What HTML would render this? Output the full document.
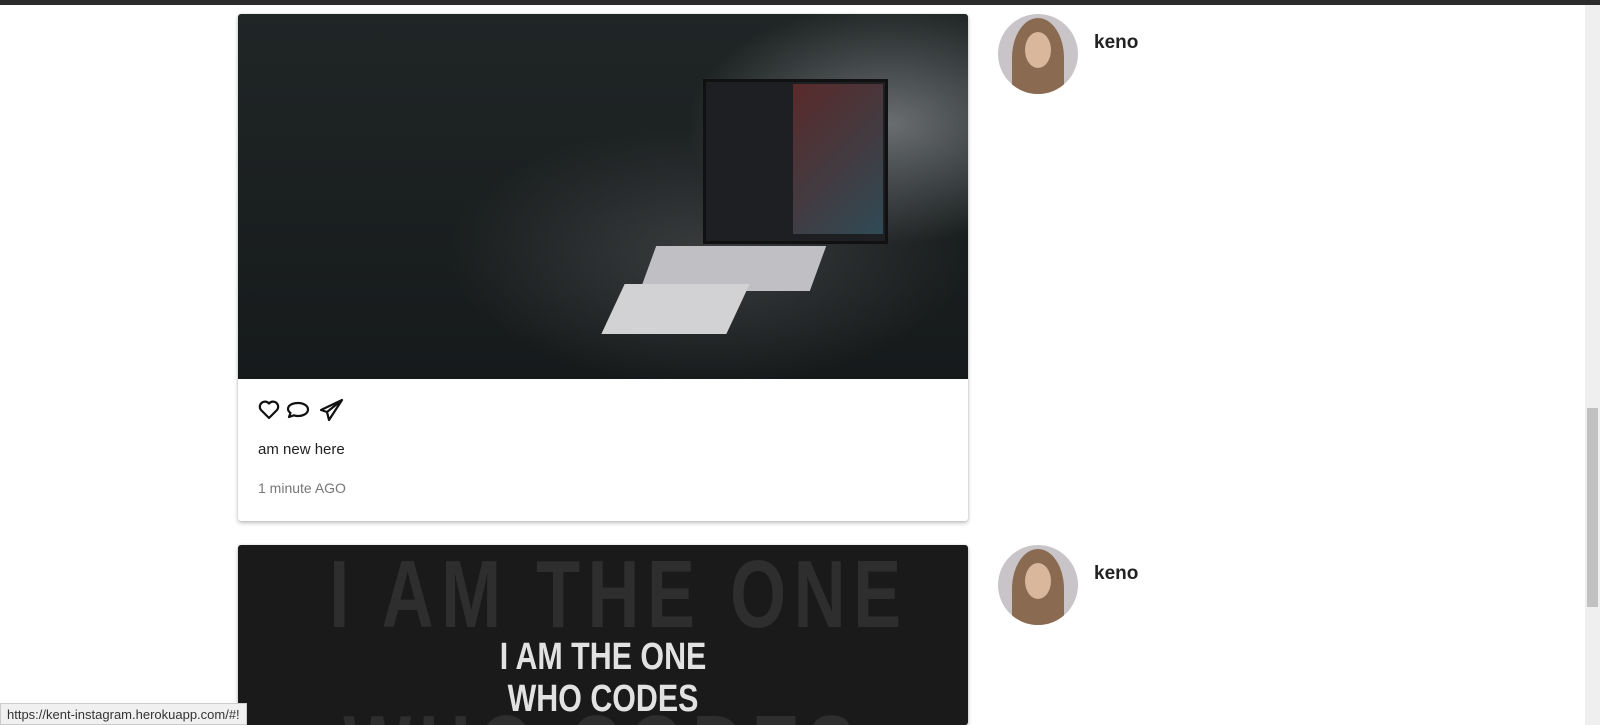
<!DOCTYPE html>
<html><head><style>
*{margin:0;padding:0;box-sizing:border-box}
body{width:1600px;height:725px;overflow:hidden;background:#fff;font-family:"Liberation Sans",Roboto,sans-serif;position:relative}
.top{position:absolute;left:0;top:0;width:1600px;height:5px;background:#2b2b2b}
.card{position:absolute;left:238px;width:730px;background:#fff;border-radius:3px;box-shadow:0 2px 4px rgba(0,0,0,.25),0 0 2px rgba(0,0,0,.12);overflow:hidden}
.img1{height:365px;background:radial-gradient(ellipse 200px 120px at 650px 110px,#6a6e70,transparent),radial-gradient(ellipse 260px 130px at 470px 240px,#3a3c3e,transparent),linear-gradient(#202526,#161a1b)}
.avatar{position:absolute;left:998px;width:80px;height:80px;border-radius:50%;overflow:hidden;background:#c9c4c8}
.avatar::before{content:"";position:absolute;left:14px;top:4px;width:52px;height:80px;border-radius:50% 50% 0 0;background:#8a6a50}
.avatar::after{content:"";position:absolute;left:27px;top:18px;width:26px;height:36px;border-radius:50%;background:#d8b79c}
.name{position:absolute;left:1094px;font-size:19px;font-weight:bold;color:#222}
.status{position:absolute;left:0;bottom:0;height:22px;padding:3px 6px;background:#f0f0f0;border:1px solid #ccc;color:#333;font-size:13px}
.sb{position:absolute;left:1585px;top:5px;width:15px;height:720px;background:#efefef}
.thumb{position:absolute;left:1587px;top:408px;width:11px;height:199px;background:#c1c1c1}
.big{position:absolute;left:0;width:730px;text-align:center;white-space:nowrap;font-family:"Liberation Sans Narrow","Liberation Sans",sans-serif;font-weight:bold}
</style></head><body>
<div class="top"></div>
<div class="card" style="top:14px;height:507px">
 <div class="img1" style="position:relative">
  <div style="position:absolute;left:465px;top:65px;width:185px;height:165px;background:#1d1f22;border:3px solid #111"></div>
  <div style="position:absolute;left:555px;top:70px;width:90px;height:150px;background:linear-gradient(135deg,#5a2a2a,#2f4a55)"></div>
  <div style="position:absolute;left:410px;top:232px;width:170px;height:45px;background:#c0c0c4;transform:skewX(-20deg)"></div>
  <div style="position:absolute;left:375px;top:270px;width:125px;height:50px;background:#d2d2d4;transform:skewX(-25deg)"></div>
 </div>
 <div style="padding:18px 20px">
  <svg width="90" height="26" viewBox="0 0 90 26" fill="none" stroke="#111" stroke-width="2.2" stroke-linejoin="round" stroke-linecap="round">
   <path d="M11 21 L3 13 A4.8 4.8 0 0 1 11 6.5 A4.8 4.8 0 0 1 19 13 Z"/>
   <path d="M40 6 c6 0 10 3 10 6.5 s-4 6.5-10 6.5 c-1.5 0-3-.3-4-.7 L31 20 l1.5-4 C31 14.8 30 13.5 30 12 c0-3.5 4-6 10-6z"/>
   <path d="M84 3 L63 13 L69 15 L71 23 Z M69 15 L84 3"/>
  </svg>
  <div style="font-size:15px;color:#222;margin-top:13px">am new here</div>
  <div style="font-size:14px;color:#777;margin-top:22px">1 minute AGO</div>
 </div>
</div>
<div class="card" style="top:545px;height:180px;background:#1a1a1a">
 <div class="big" style="top:-5px;font-size:96px;color:#2e2e2e;letter-spacing:10px;transform:scaleX(.75)">I AM THE ONE</div>
 <div class="big" style="top:150px;font-size:96px;color:#2e2e2e;letter-spacing:10px;transform:scaleX(.75)">WHO CODES</div>
 <div class="big" style="top:92px;font-size:38px;line-height:1.1;color:#e2e2e2;transform:scaleX(.8)">I AM THE ONE<br>WHO CODES</div>
</div>
<div class="avatar" style="top:14px"></div><div class="name" style="top:32px">keno</div>
<div class="avatar" style="top:545px"></div><div class="name" style="top:563px">keno</div>
<div class="status">https://kent-instagram.herokuapp.com/#!</div>
<div class="sb"></div><div class="thumb"></div>
</body></html>
